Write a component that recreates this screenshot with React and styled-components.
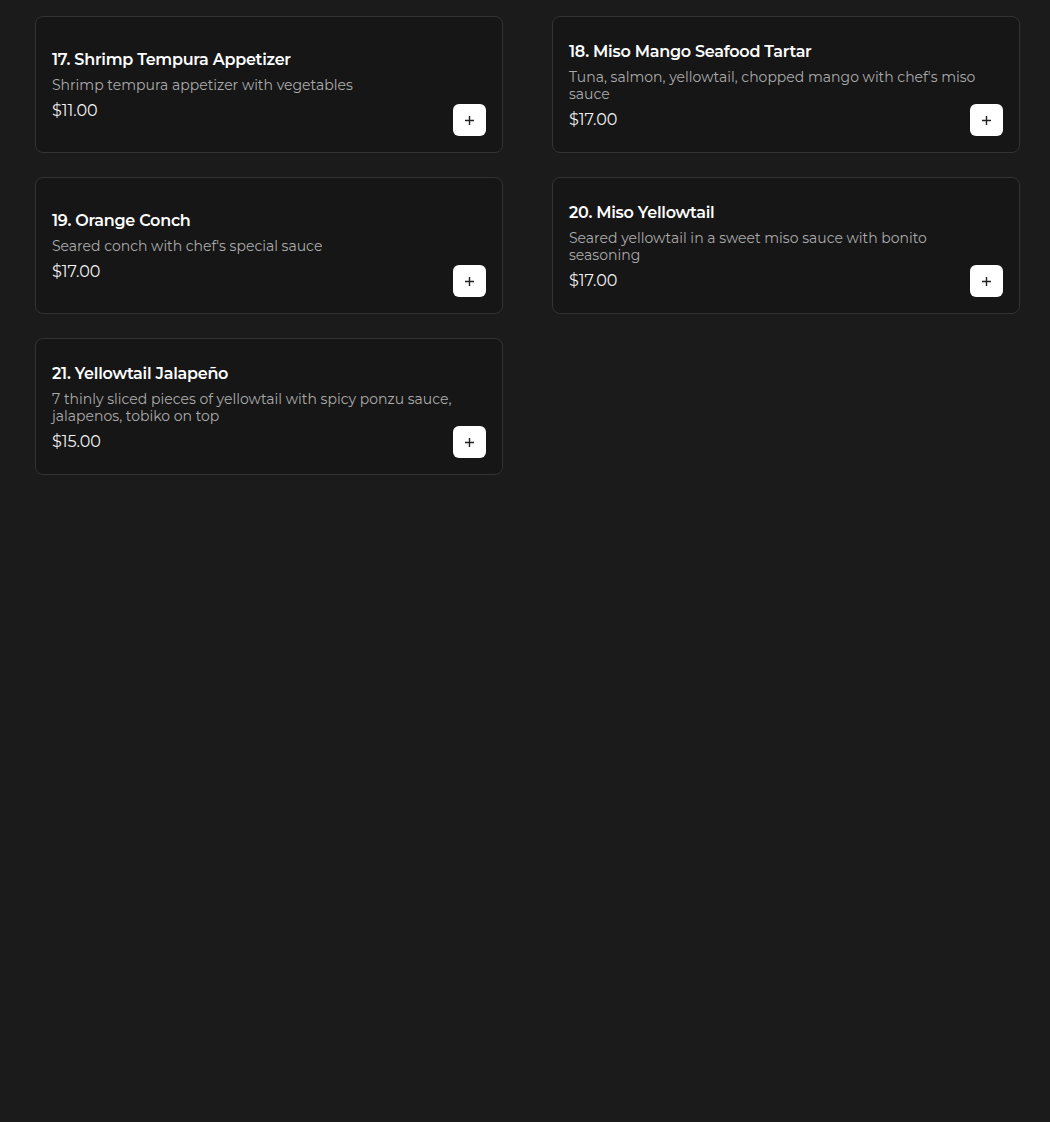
import React from "react";
import styled, { createGlobalStyle } from "styled-components";

const items = [
  { id: 17, name: "Shrimp Tempura Appetizer", desc: "Shrimp tempura appetizer with vegetables", price: 11 },
  { id: 18, name: "Miso Mango Seafood Tartar", desc: "Tuna, salmon, yellowtail, chopped mango with chef's miso sauce", price: 17 },
  { id: 19, name: "Orange Conch", desc: "Seared conch with chef's special sauce", price: 17 },
  { id: 20, name: "Miso Yellowtail", desc: "Seared yellowtail in a sweet miso sauce with bonito seasoning", price: 17 },
  { id: 21, name: "Yellowtail Jalapeño", desc: "7 thinly sliced pieces of yellowtail with spicy ponzu sauce, jalapenos, tobiko on top", price: 15 },
];

const GlobalStyle = createGlobalStyle`
  html, body {
    margin: 0;
    background: #1b1b1b;
    font-family: Montserrat, "Open Sans", "Noto Sans", sans-serif;
    color: #fff;
  }
`;

const Page = styled.div`
  min-height: 1122px;
  padding: 16px 29px 0 35px;
  box-sizing: border-box;
`;

const Grid = styled.div`
  display: grid;
  grid-template-columns: 468px 468px;
  column-gap: 49px;
  row-gap: 24px;
`;

// info and button share one grid cell; the button sits in the bottom-right corner
const Card = styled.div`
  height: 137px;
  box-sizing: border-box;
  border: 1px solid #333;
  border-radius: 8px;
  background: #161616;
  padding: 16px;
  display: grid;
  grid-template-areas: "main";
  align-items: center;
`;

const Info = styled.div`
  grid-area: main;
  display: flex;
  flex-direction: column;
  padding: 2px 20px 0 0;
`;

const Title = styled.h3`
  margin: 0 0 7px;
  font-size: 16px;
  font-weight: 600;
  line-height: 20px;
  letter-spacing: -0.25px;
  color: #fff;
`;

const Desc = styled.p`
  margin: 0 0 7px;
  font-size: 14px;
  font-weight: 400;
  line-height: 17px;
  color: #ababab;
`;

const Price = styled.span`
  font-size: 16px;
  line-height: 20px;
  color: #f2f2f2;
`;

const AddButton = styled.button`
  grid-area: main;
  align-self: end;
  justify-self: end;
  width: 33px;
  height: 32px;
  border: none;
  border-radius: 6px;
  background: #fff;
  display: flex;
  align-items: center;
  justify-content: center;
  padding: 0;
  cursor: pointer;
`;

function Plus() {
  return (
    <svg width="11" height="11" viewBox="0 0 11 11">
      <path d="M5.5 1v9M1 5.5h9" stroke="#222" strokeWidth="1.4" />
    </svg>
  );
}

export default function App() {
  return (
    <Page>
      <GlobalStyle />
      <Grid>
        {items.map((item) => (
          <Card key={item.id}>
            <Info>
              <Title>
                {item.id}. {item.name}
              </Title>
              <Desc>{item.desc}</Desc>
              <Price>${item.price.toFixed(2)}</Price>
            </Info>
            <AddButton aria-label="Add">
              <Plus />
            </AddButton>
          </Card>
        ))}
      </Grid>
    </Page>
  );
}
